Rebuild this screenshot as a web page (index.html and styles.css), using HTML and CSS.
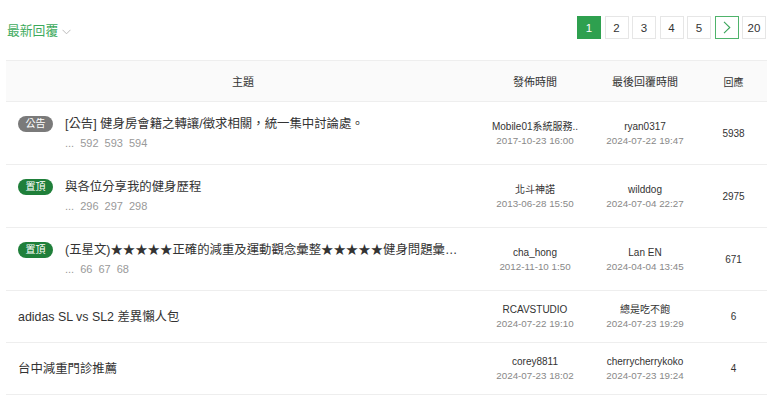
FILE: index.html
```html
<!DOCTYPE html>
<html lang="zh-Hant">
<head>
<meta charset="utf-8">
<title>最新回覆</title>
<link rel="stylesheet" href="styles.css">
</head>
<body>
<div class="page">
  <div class="topbar">
    <div class="sort">最新回覆
      <svg class="caret" width="9" height="6" viewBox="0 0 9 6"><path d="M0.5 0.8 L4.5 4.8 L8.5 0.8" fill="none" stroke="#bbb" stroke-width="1"/></svg>
    </div>
    <div class="pager">
      <span class="pg active">1</span>
      <span class="pg">2</span>
      <span class="pg">3</span>
      <span class="pg">4</span>
      <span class="pg">5</span>
      <span class="pg next"><svg width="8" height="13" viewBox="0 0 8 13"><path d="M1 0.8 L6.8 6.5 L1 12.2" fill="none" stroke="#3aa55a" stroke-width="1.1"/></svg></span>
      <span class="pg">20</span>
    </div>
  </div>

  <div class="table">
    <div class="row head">
      <div class="c-topic">主題</div>
      <div class="c-meta">發佈時間</div>
      <div class="c-meta">最後回覆時間</div>
      <div class="c-reply">回應</div>
    </div>

    <div class="row tall">
      <div class="c-topic">
        <span class="badge gray">公告</span>
        <div class="t-body">
          <div class="t-title">[公告] 健身房會籍之轉讓/徵求相關，統一集中討論處。</div>
          <div class="t-pages"><span>...</span><span>592</span><span>593</span><span>594</span></div>
        </div>
      </div>
      <div class="c-meta"><div class="who">Mobile01系統服務..</div><div class="when">2017-10-23 16:00</div></div>
      <div class="c-meta"><div class="who">ryan0317</div><div class="when">2024-07-22 19:47</div></div>
      <div class="c-reply">5938</div>
    </div>

    <div class="row tall">
      <div class="c-topic">
        <span class="badge green">置頂</span>
        <div class="t-body">
          <div class="t-title">與各位分享我的健身歷程</div>
          <div class="t-pages"><span>...</span><span>296</span><span>297</span><span>298</span></div>
        </div>
      </div>
      <div class="c-meta"><div class="who">北斗神諾</div><div class="when">2013-06-28 15:50</div></div>
      <div class="c-meta"><div class="who">wilddog</div><div class="when">2024-07-04 22:27</div></div>
      <div class="c-reply">2975</div>
    </div>

    <div class="row tall">
      <div class="c-topic">
        <span class="badge green">置頂</span>
        <div class="t-body">
          <div class="t-title">(五星文)★★★★★正確的減重及運動觀念彙整★★★★★健身問題彙整★★★★★</div>
          <div class="t-pages"><span>...</span><span>66</span><span>67</span><span>68</span></div>
        </div>
      </div>
      <div class="c-meta"><div class="who">cha_hong</div><div class="when">2012-11-10 1:50</div></div>
      <div class="c-meta"><div class="who">Lan EN</div><div class="when">2024-04-04 13:45</div></div>
      <div class="c-reply">671</div>
    </div>

    <div class="row">
      <div class="c-topic">
        <div class="t-body">
          <div class="t-title">adidas SL vs SL2 差異懶人包</div>
        </div>
      </div>
      <div class="c-meta"><div class="who">RCAVSTUDIO</div><div class="when">2024-07-22 19:10</div></div>
      <div class="c-meta"><div class="who">總是吃不飽</div><div class="when">2024-07-23 19:29</div></div>
      <div class="c-reply">6</div>
    </div>

    <div class="row">
      <div class="c-topic">
        <div class="t-body">
          <div class="t-title">台中減重門診推薦</div>
        </div>
      </div>
      <div class="c-meta"><div class="who">corey8811</div><div class="when">2024-07-23 18:02</div></div>
      <div class="c-meta"><div class="who">cherrycherrykoko</div><div class="when">2024-07-23 19:24</div></div>
      <div class="c-reply">4</div>
    </div>
  </div>
</div>
</body>
</html>
```

FILE: styles.css
```css
html, body {
  margin: 0;
  padding: 0;
  background: #ffffff;
}
body {
  font-family: "Liberation Sans", "Noto Sans CJK TC", Arial, sans-serif;
  color: #333;
  width: 780px;
  height: 405px;
  overflow: hidden;
}
.page {
  width: 761px;
  padding-left: 6px;
}
.topbar {
  height: 60px;
  display: flex;
  justify-content: space-between;
  align-items: center;
}
.sort {
  display: flex;
  align-items: center;
  padding-left: 1px;
  margin-top: 1px;
  font-size: 12.8px;
  color: #3daa5c;
  line-height: 16px;
}
.caret {
  margin-left: 4px;
  margin-top: 2px;
}
.pager {
  display: flex;
  gap: 3.5px;
  margin-right: 1px;
  margin-top: -5px;
}
.pg {
  box-sizing: border-box;
  width: 24px;
  height: 23px;
  border: 1px solid #e6e6e6;
  background: #fff;
  display: flex;
  align-items: center;
  justify-content: center;
  font-size: 11.5px;
  color: #333;
}
.pg.active {
  background: #2ea04f;
  border-color: #2ea04f;
  color: #fff;
}
.pg.next {
  border: 1.5px solid #4fb36b;
}
.table {
  border-top: 1px solid #eeeeee;
}
.row {
  display: grid;
  grid-template-columns: 474px 110px 110px 67px;
  align-items: center;
  height: 51px;
  border-bottom: 1px solid #eeeeee;
}
.row.tall {
  height: 62px;
}
.row.head {
  height: 40px;
  background: #fafafa;
  font-size: 11px;
  color: #333;
}
.row.head > div {
  text-align: center;
}
.c-topic {
  display: flex;
  align-items: flex-start;
  padding-left: 12px;
  padding-right: 15px;
  min-width: 0;
}
.row.head .c-topic {
  display: block;
  padding: 0;
}
.badge {
  flex: none;
  width: 35px;
  height: 16px;
  border-radius: 8px;
  margin-top: 1px;
  margin-right: 12px;
  display: flex;
  align-items: center;
  justify-content: center;
  font-size: 10px;
  color: #fff;
  line-height: 16px;
}
.badge.gray {
  background: #7a7a7a;
}
.badge.green {
  background: #1f7f3a;
}
.t-body {
  min-width: 0;
  flex: 1;
}
.t-title {
  font-size: 12.4px;
  line-height: 18px;
  color: #333;
  white-space: nowrap;
  overflow: hidden;
  text-overflow: ellipsis;
}
.t-pages {
  display: flex;
  gap: 6px;
  font-size: 11px;
  line-height: 18px;
  color: #999;
  margin-top: 1px;
}
.c-meta {
  text-align: center;
  white-space: nowrap;
}
.who {
  font-size: 10px;
  line-height: 14px;
  color: #333;
}
.when {
  font-size: 9.8px;
  line-height: 13px;
  color: #888;
}
.c-reply {
  text-align: center;
  font-size: 10px;
  color: #333;
}
```
